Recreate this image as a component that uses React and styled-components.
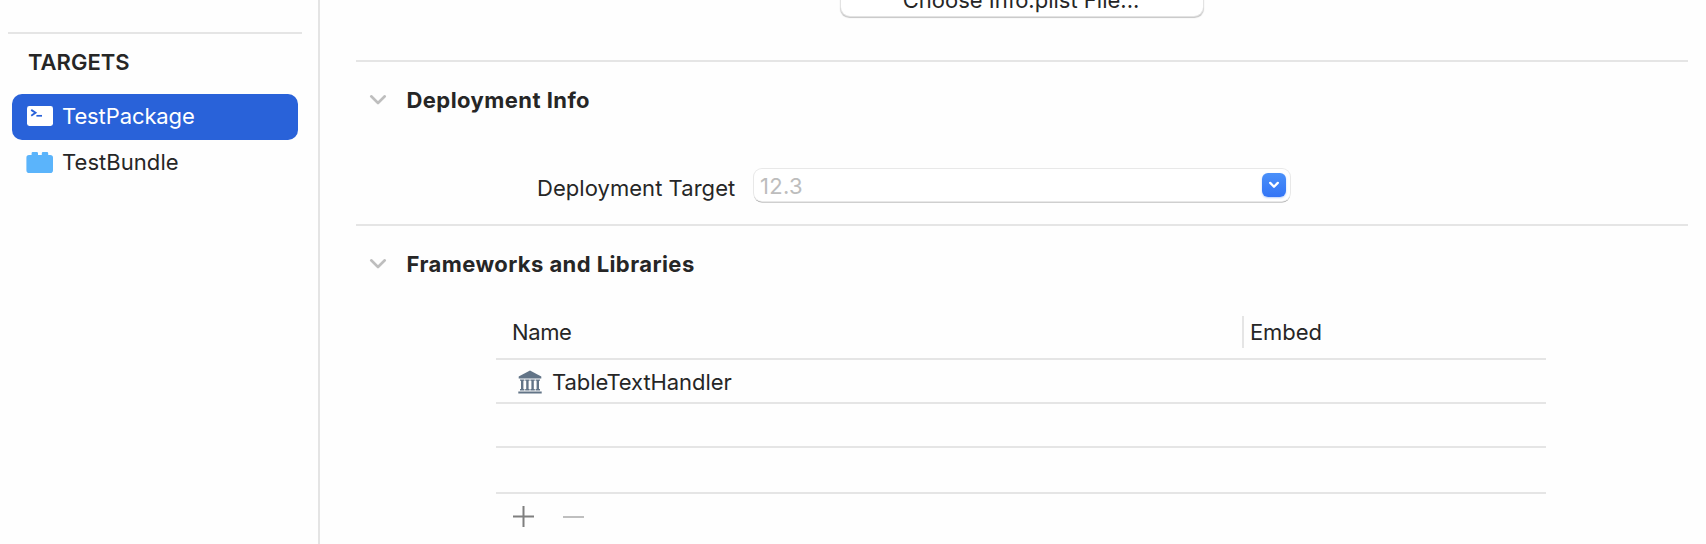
import React from "react";
import styled, { createGlobalStyle } from "styled-components";

const GlobalStyle = createGlobalStyle`
  * { box-sizing: border-box; }
  body {
    margin: 0;
    overflow: hidden;
    background: #fefefe;
    color: #262626;
    font: 400 22px/26px Inter, "Liberation Sans", sans-serif;
  }
`;

const Window = styled.div`
  display: flex;
  height: 544px;
  overflow: hidden;
`;

const Sidebar = styled.aside`
  width: 320px;
  flex: none;
  padding-top: 32px;
  border-right: 2px solid #e4e4e4;
`;

const Rule = styled.div`
  height: 2px;
  background: #e5e5e5;
`;

const SidebarRule = styled(Rule)`
  margin: 0 16px 0 8px;
`;

const SidebarTitle = styled.h2`
  margin: 15px 0 19px 28px;
  font: inherit;
  font-weight: 600;
`;

const TargetRow = styled.div`
  display: flex;
  align-items: center;
  height: 46px;
  margin: 0 20px 0 12px;
  padding: 0 14px 2px;
  gap: 9px;
  border-radius: 10px;
  background: ${(p) => (p.$selected ? "#2962d9" : "transparent")};
  color: ${(p) => (p.$selected ? "#fff" : "inherit")};
  svg { flex: none; }
`;

const Label = styled.span`
  white-space: nowrap;
  letter-spacing: ${(p) => p.$tracking || 0}px;
`;

const Main = styled.main`
  flex: 1;
  min-width: 0;
  padding: 0 18px 0 36px;
`;

const PlistButton = styled.button`
  display: flex;
  justify-content: center;
  width: 362px;
  height: 44px;
  margin: -28px 0 44px 485px;
  padding: 15px 2px 0 0;
  border: 0;
  border-radius: 9px;
  background: #fff;
  box-shadow: 0 0 0 1px #e3e3e3, 0 1px 1px 0.5px #c6c6c6;
  color: inherit;
  font: inherit;
`;

const SectionHeader = styled.header`
  display: flex;
  align-items: center;
  gap: 19.5px;
  padding: 25px 0 0 13px;
  font-weight: 700;
`;

const FieldRow = styled.div`
  display: flex;
  height: 34px;
  margin: 55px 0 22px 181px;
`;

const FieldLabel = styled(Label)`
  width: 217px;
  flex: none;
  padding-top: 7px;
`;

const ComboBox = styled.div`
  display: flex;
  justify-content: space-between;
  align-items: flex-start;
  width: 536px;
  height: 32px;
  margin: 1px 0 0;
  padding: 4px 4px 0 6px;
  border-radius: 8px;
  background: #fff;
  box-shadow: 0 0 0 1px #e8e8e8, 0 1.5px 0.5px 0 #a0a0a0;
  color: #bdbdbd;
`;

const ComboArrow = styled.span`
  display: flex;
  align-items: center;
  justify-content: center;
  width: 24px;
  height: 24px;
  border-radius: 6px;
  background: linear-gradient(#4a90f9, #3274f6);
  box-shadow: 0 1px 2px rgba(50, 116, 246, 0.35);
`;

const Table = styled.section`
  width: 1050px;
  margin: 39px 0 0 140px;
`;

const TableHead = styled.div`
  display: flex;
  height: 44px;
  border-bottom: 2px solid #e5e5e5;
`;

const NameHead = styled.div`
  width: 746px;
  padding: 3px 0 0 16px;
`;

const EmbedHead = styled.div`
  height: 32px;
  padding: 3px 0 0 6px;
  border-left: 2px solid #e5e5e5;
`;

const TableRow = styled.div`
  display: flex;
  align-items: center;
  gap: 10.5px;
  height: ${(p) => p.$height || 44}px;
  padding: 2px 0 0 21.5px;
  border-bottom: 2px solid #e5e5e5;
`;

const TableActions = styled.div`
  display: flex;
  gap: 29px;
  padding: 12px 0 0 17px;
`;

const TerminalIcon = () => (
  <svg width="27" height="22" viewBox="0 0 27 22">
    <rect x="1" y="1" width="26" height="20" rx="2.4" fill="#fff" />
    <path d="M5.2 4.9 9.500 7.800 5.200 10.700" fill="none" stroke="#2962d9" strokeWidth="1.9" />
    <path d="M10.400 10.800h5.600" stroke="#2962d9" strokeWidth="1.700" />
  </svg>
);

const BrickIcon = () => (
  <svg width="27" height="22" viewBox="0 0 27 22">
    <path
      d="M3 4h2.600V2.200Q5.600 1 6.800 1h4Q12 1 12 2.200V4h3.800V2.200Q15.800 1 17 1h4Q22.200 1 22.200 2.200V4H24.200Q27 4 27 6.800v12.400Q27 22 24.200 22H3.200Q.4 22 .4 19.200V6.800Q.4 4 3 4Z"
      fill="#5bb4fb"
    />
  </svg>
);

const LibraryIcon = () => (
  <svg width="24" height="24" viewBox="0 0 24 24" fill="#627487">
    <path d="M12 .5 23.300 6.400V8.400H.7V6.400Z" />
    {[2.2, 7.4, 12.6, 17.8].map((x) => (
      <path key={x} d={`M${x - 0.2} 9.400h4.400v1.400h-1v8.200h1v1.500h-4.400V19h1v-8.200h-1Z`} />
    ))}
    <path d="M.3 21.500h23.400v2H.3Z" />
  </svg>
);

const Disclosure = () => (
  <svg width="18" height="12" viewBox="0 0 18 12">
    <path d="m2.200 2.300 6.800 6.700 6.800-6.700" fill="none" stroke="#bebebe" strokeWidth="2.600" strokeLinecap="round" strokeLinejoin="round" />
  </svg>
);

const ArrowIcon = () => (
  <svg width="10" height="8" viewBox="0 0 10 8">
    <path d="M1.200 1.900 5 5.700l3.800-3.800" fill="none" stroke="#fff" strokeWidth="2.300" strokeLinecap="round" strokeLinejoin="round" />
  </svg>
);

const AddIcon = () => (
  <svg width="21" height="22" viewBox="0 0 21 22">
    <path d="M0 10.500h21M10.500 0v21" stroke="#7f7f7f" strokeWidth="2" />
  </svg>
);

const RemoveIcon = () => (
  <svg width="21" height="22" viewBox="0 0 21 22">
    <path d="M0 11h21" stroke="#bfbfbf" strokeWidth="2" />
  </svg>
);

export default function App() {
  return (
    <Window>
      <GlobalStyle />
      <Sidebar>
        <SidebarRule />
        <SidebarTitle>TARGETS</SidebarTitle>
        <TargetRow $selected>
          <TerminalIcon />
          <Label $tracking={-0.1}>TestPackage</Label>
        </TargetRow>
        <TargetRow>
          <BrickIcon />
          <Label $tracking={0.05}>TestBundle</Label>
        </TargetRow>
      </Sidebar>
      <Main>
        <PlistButton>
          <Label>Choose Info.plist File...</Label>
        </PlistButton>
        <Rule />
        <SectionHeader>
          <Disclosure />
          <Label $tracking={0.44}>Deployment Info</Label>
        </SectionHeader>
        <FieldRow>
          <FieldLabel $tracking={0.045}>Deployment Target</FieldLabel>
          <ComboBox>
            <Label $tracking={0.3}>12.3</Label>
            <ComboArrow>
              <ArrowIcon />
            </ComboArrow>
          </ComboBox>
        </FieldRow>
        <Rule />
        <SectionHeader>
          <Disclosure />
          <Label $tracking={0.42}>Frameworks and Libraries</Label>
        </SectionHeader>
        <Table>
          <TableHead>
            <NameHead>
              <Label $tracking={-0.4}>Name</Label>
            </NameHead>
            <EmbedHead>
              <Label $tracking={-0.1}>Embed</Label>
            </EmbedHead>
          </TableHead>
          <TableRow>
            <LibraryIcon />
            <Label $tracking={-0.08}>TableTextHandler</Label>
          </TableRow>
          <TableRow />
          <TableRow $height={46} />
          <TableActions>
            <AddIcon />
            <RemoveIcon />
          </TableActions>
        </Table>
      </Main>
    </Window>
  );
}
